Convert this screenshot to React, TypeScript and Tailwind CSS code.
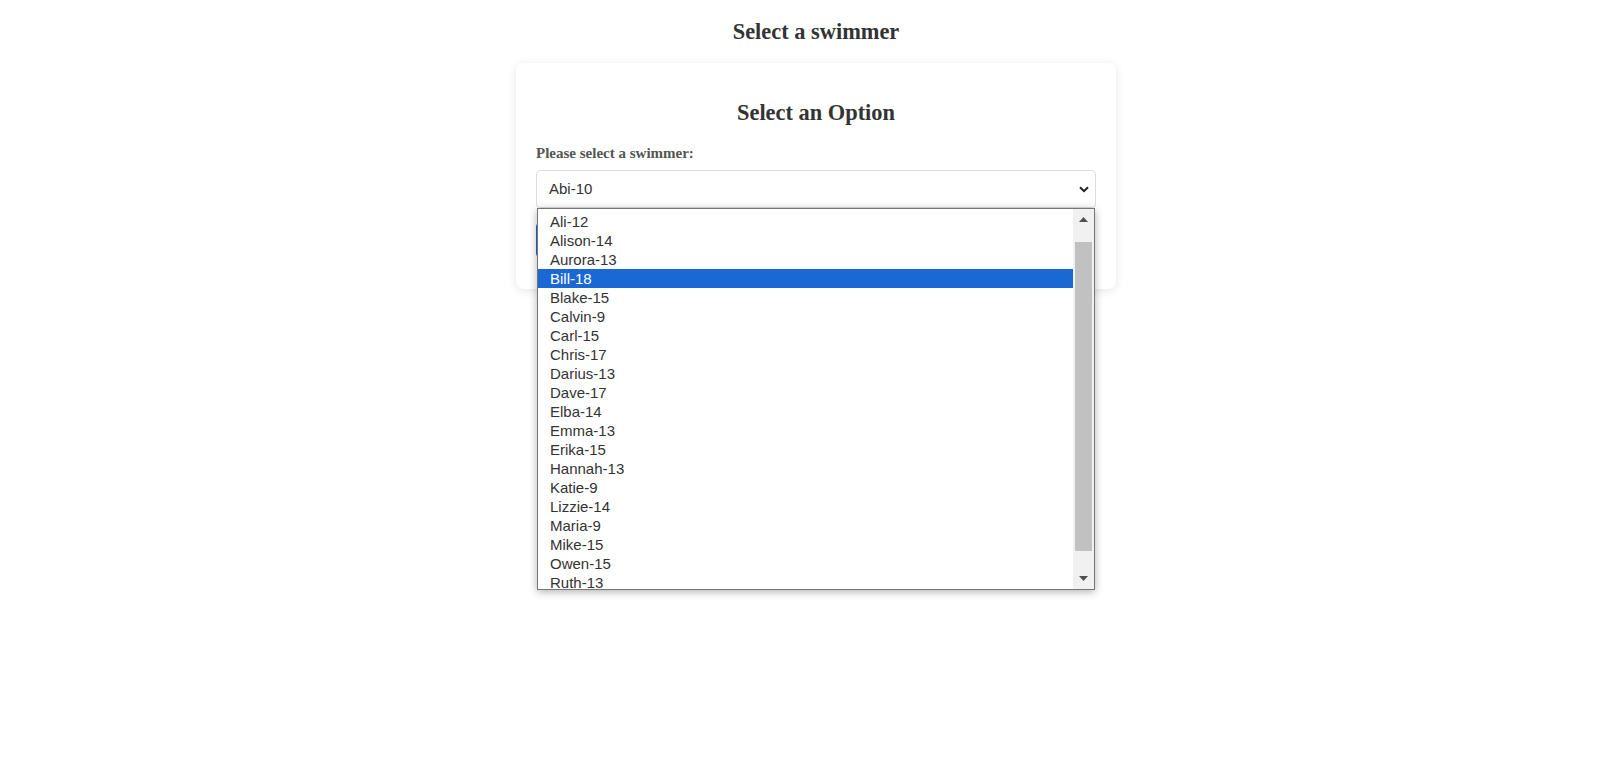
import React from "react";

const options = [
  "Ali-12",
  "Alison-14",
  "Aurora-13",
  "Bill-18",
  "Blake-15",
  "Calvin-9",
  "Carl-15",
  "Chris-17",
  "Darius-13",
  "Dave-17",
  "Elba-14",
  "Emma-13",
  "Erika-15",
  "Hannah-13",
  "Katie-9",
  "Lizzie-14",
  "Maria-9",
  "Mike-15",
  "Owen-15",
  "Ruth-13",
];

export default function App() {
  return (
    <div className="min-h-screen bg-white pl-[9px] font-['Liberation_Serif',serif] text-[#333] flow-root">
      <h2 className="mt-[20px] mb-[18px] text-center text-[22.4px] font-bold leading-[24.8px]">
        Select a swimmer
      </h2>
      <div className="mx-auto w-[600px] rounded-lg bg-white px-5 pt-5 pb-8 shadow-[0_2px_10px_rgba(0,0,0,0.1)]">
        <h2 className="my-[18.6px] text-center text-[22.4px] font-bold leading-[24.8px]">
          Select an Option
        </h2>
        <label className="mb-2 block text-[15px] font-bold leading-[17px] text-[#555]">
          Please select a swimmer:
        </label>
        <div className="relative">
          <div className="flex h-[38px] items-center justify-between rounded border border-[#dcdcdc] bg-white pl-3 pr-[6px] font-['Liberation_Sans',Arial,sans-serif] text-[15px] text-[#333]">
            <span>Abi-10</span>
            <svg width="10" height="7" viewBox="0 0 10 7" className="mt-[1px]">
              <path d="M1 1.2 L5 5.2 L9 1.2" fill="none" stroke="#222" strokeWidth="2" />
            </svg>
          </div>
          <button className="mt-[15px] h-[34px] rounded bg-[#1a6ad6] px-4 font-['Liberation_Sans',Arial,sans-serif] text-[15px] text-white">
            Submit
          </button>

          <div className="absolute top-[38px] left-[1px] right-[1px] flex h-[382px] border border-[#767676] bg-white font-['Liberation_Sans',Arial,sans-serif] text-[15px] text-[#333] shadow-[0_2px_8px_rgba(0,0,0,0.3)]">
            <div className="flex-1 overflow-hidden pt-[3px]">
              {options.map((o) => (
                <div
                  key={o}
                  className={
                    o === "Bill-18"
                      ? "h-[19px] bg-[#1a68d4] pl-[12px] leading-[19px] text-white"
                      : "h-[19px] pl-[12px] leading-[19px]"
                  }
                >
                  {o}
                </div>
              ))}
            </div>
            <div className="flex w-[21px] flex-col bg-[#f1f1f1]">
              <div className="flex h-[17px] items-center justify-center pt-[4px]">
                <svg width="9" height="5" viewBox="0 0 9 5">
                  <path d="M0 5 L4.5 0 L9 5 Z" fill="#505050" />
                </svg>
              </div>
              <div className="flex-1 px-[2px]">
                <div className="mt-[16px] h-[309px] bg-[#c1c1c1]" />
              </div>
              <div className="flex h-[17px] items-center justify-center pb-[3px]">
                <svg width="9" height="5" viewBox="0 0 9 5">
                  <path d="M0 0 L9 0 L4.5 5 Z" fill="#505050" />
                </svg>
              </div>
            </div>
          </div>
        </div>
      </div>
    </div>
  );
}
